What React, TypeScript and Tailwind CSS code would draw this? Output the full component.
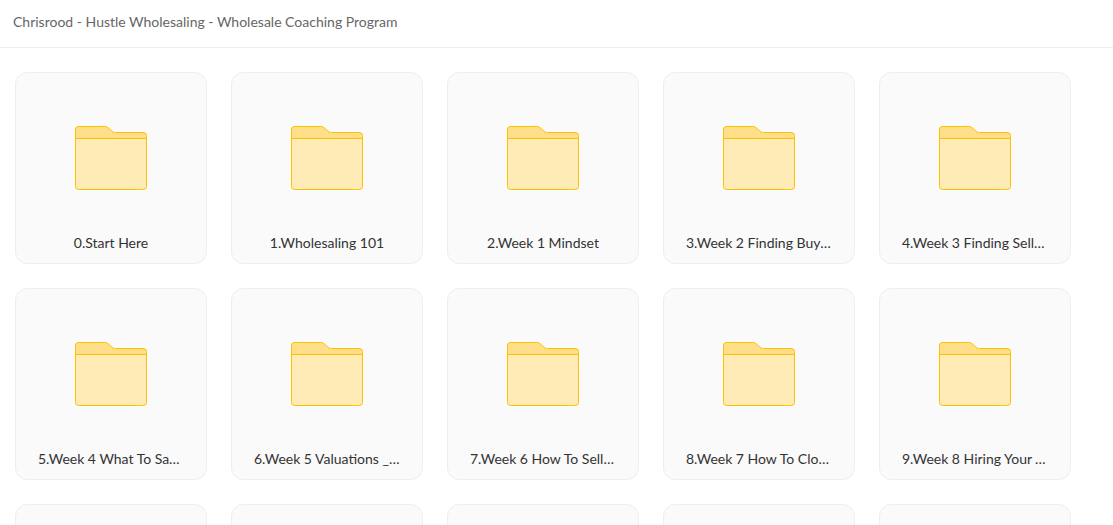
const folders = [
  '0.Start Here',
  '1.Wholesaling 101',
  '2.Week 1 Mindset',
  '3.Week 2 Finding Buyers',
  '4.Week 3 Finding Sellers',
  '5.Week 4 What To Say To Sellers',
  '6.Week 5 Valuations _ Offers',
  '7.Week 6 How To Sell Your Deal',
  '8.Week 7 How To Close Deals',
  '9.Week 8 Hiring Your Team',
  '10.Week 9 Scaling',
  '11.Contracts',
  '12.Scripts',
  '13.Live Calls',
  '14.Bonuses',
];

function FolderIcon() {
  return (
    <svg width="72" height="64" viewBox="0 0 72 64" fill="none" aria-hidden="true" className="shrink-0">
      <path
        d="M.5 12.5V3.5a3 3 0 0 1 3-3H29c2.200 0 3.600.6 5.200 2l1.900 1.900c1.600 1.500 2.600 2.100 4.400 2.100h28a3 3 0 0 1 3 3v3z"
        fill="#ffde8a"
        stroke="#fcc200"
      />
      <path d="M.5 12.5h71v48a3 3 0 0 1-3 3h-65a3 3 0 0 1-3-3z" fill="#ffebb5" stroke="#fcc200" />
    </svg>
  );
}

function FolderCard({ name }: { name: string }) {
  return (
    <li>
      <button
        type="button"
        title={name}
        className="flex h-48 w-48 flex-col items-center rounded-xl border border-[#eeeeee] bg-[#fafafa] px-[22px] pt-[53px] hover:bg-[#f4f4f4]"
      >
        <FolderIcon />
        <span className="mt-[43px] w-full truncate text-center text-[14px] leading-5 text-[#333333]">{name}</span>
      </button>
    </li>
  );
}

export default function App() {
  return (
    <div className="flex h-screen flex-col bg-white font-['Lato',sans-serif]">
      <header className="flex h-12 shrink-0 items-center border-b border-[#eeeeee] px-[13px] pb-1">
        <h1 className="truncate text-[14px] leading-5 text-[#666666]">
          Chrisrood - Hustle Wholesaling - Wholesale Coaching Program
        </h1>
      </header>
      <main className="min-h-0 flex-1 overflow-y-auto [scrollbar-width:none]">
        <ul className="flex flex-wrap gap-6 px-[15px] py-6">
          {folders.map((name) => (
            <FolderCard key={name} name={name} />
          ))}
        </ul>
      </main>
    </div>
  );
}
